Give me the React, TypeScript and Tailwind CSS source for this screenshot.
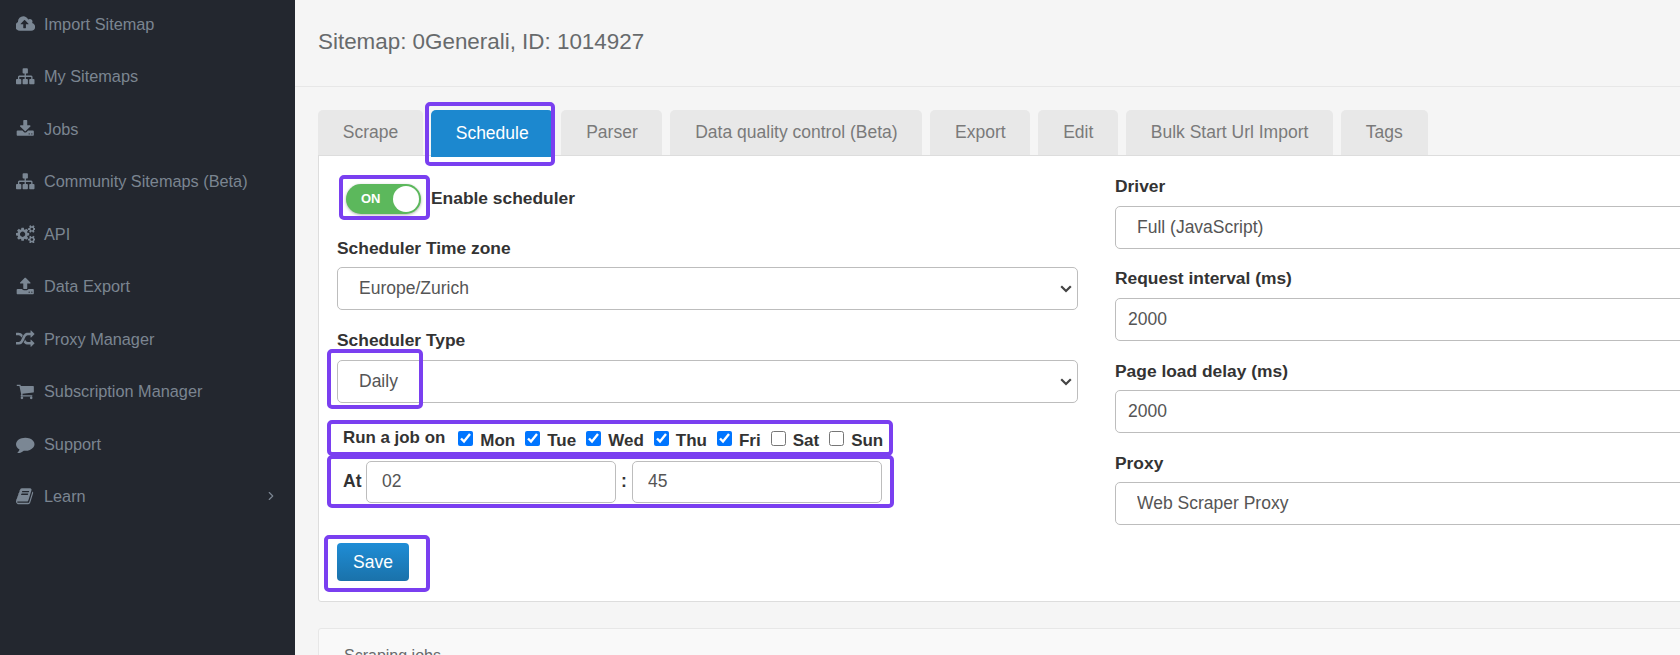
import React from "react";
import { ChevronRight } from "lucide-react";

// old font-awesome glyphs, the newer sets in react-icons draw these differently
const glyphs: Record<string, { d: string; w: number }> = {
  cloud: {
    w: 1920,
    d: "M1216 864q0-14-9-23l-352-352q-9-9-23-9t-23 9l-351 351q-10 12-10 24 0 14 9 23t23 9h224v352q0 13 9.5 22.5t22.5 9.5h192q13 0 22.5-9.5t9.5-22.5v-352h224q13 0 22.5-9.5t9.5-22.5zm640 288q0 159-112.5 271.5t-271.5 112.5h-1088q-185 0-316.5-131.5t-131.5-316.5q0-130 70-240t188-165q-2-30-2-43 0-212 150-362t362-150q156 0 285.5 87t188.5 231q71-62 166-62 106 0 181 75t75 181q0 76-41 138 130 31 213.5 135.5t83.5 238.5z",
  },
  sitemap: {
    w: 1792,
    d: "M1792 1248v320q0 40-28 68t-68 28h-320q-40 0-68-28t-28-68v-320q0-40 28-68t68-28h96v-192h-512v192h96q40 0 68 28t28 68v320q0 40-28 68t-68 28h-320q-40 0-68-28t-28-68v-320q0-40 28-68t68-28h96v-192h-512v192h96q40 0 68 28t28 68v320q0 40-28 68t-68 28h-320q-40 0-68-28t-28-68v-320q0-40 28-68t68-28h96v-192q0-52 38-90t90-38h512v-192h-96q-40 0-68-28t-28-68v-320q0-40 28-68t68-28h320q40 0 68 28t28 68v320q0 40-28 68t-68 28h-96v192h512q52 0 90 38t38 90v192h96q40 0 68 28t28 68z",
  },
  download: {
    w: 1792,
    d: "M1344 1344q0-26-19-45t-45-19-45 19-19 45 19 45 45 19 45-19 19-45zm256 0q0-26-19-45t-45-19-45 19-19 45 19 45 45 19 45-19 19-45zm128-224v320q0 40-28 68t-68 28h-1472q-40 0-68-28t-28-68v-320q0-40 28-68t68-28h465l135 136q58 56 136 56t136-56l136-136h464q40 0 68 28t28 68zm-325-569q17 41-14 70l-448 448q-18 19-45 19t-45-19l-448-448q-31-29-14-70 17-39 59-39h256v-448q0-26 19-45t45-19h256q26 0 45 19t19 45v448h256q42 0 59 39z",
  },
  cogs: {
    w: 1920,
    d: "M896 896q0-106-75-181t-181-75-181 75-75 181 75 181 181 75 181-75 75-181zm768 512q0-52-38-90t-90-38-90 38-38 90q0 53 37.5 90.5t90.5 37.5 90.5-37.5 37.5-90.5zm0-1024q0-52-38-90t-90-38-90 38-38 90q0 53 37.5 90.5t90.5 37.5 90.5-37.5 37.5-90.5zm-384 421v185q0 10-7 19.5t-16 10.5l-155 24q-11 35-32 76 34 48 90 115 7 11 7 20 0 12-7 19-23 30-82.5 89.5t-78.5 59.5q-11 0-21-7l-115-90q-37 19-77 31-11 108-23 155-7 24-30 24h-186q-11 0-20-7.5t-10-17.5l-23-153q-34-10-75-31l-118 89q-7 7-20 7-11 0-21-8-144-133-144-160 0-9 7-19 10-14 41-53t47-61q-23-44-35-82l-152-24q-10-1-17-9.5t-7-19.5v-185q0-10 7-19.5t16-10.5l155-24q11-35 32-76-34-48-90-115-7-11-7-20 0-12 7-20 22-30 82-89t79-59q11 0 21 7l115 90q34-18 77-32 11-108 23-154 7-24 30-24h186q11 0 20 7.5t10 17.5l23 153q34 10 75 31l118-89q8-7 20-7 11 0 21 8 144 133 144 160 0 8-7 19-12 16-42 54t-45 60q23 48 34 82l152 23q10 2 17 10.5t7 19.5zm640 533v140q0 16-149 31-12 27-30 52 51 113 51 138 0 4-4 7-122 71-124 71-8 0-46-47t-52-68q-20 2-30 2t-30-2q-14 21-52 68t-46 47q-2 0-124-71-4-3-4-7 0-25 51-138-18-25-30-52-149-15-149-31v-140q0-16 149-31 13-29 30-52-51-113-51-138 0-4 4-7 4-2 35-20t59-34 30-16q8 0 46 46.5t52 67.5q20-2 30-2t30 2q51-71 92-112l6-2q4 0 124 70 4 3 4 7 0 25-51 138 17 23 30 52 149 15 149 31zm0-1024v140q0 16-149 31-12 27-30 52 51 113 51 138 0 4-4 7-122 71-124 71-8 0-46-47t-52-68q-20 2-30 2t-30-2q-14 21-52 68t-46 47q-2 0-124-71-4-3-4-7 0-25 51-138-18-25-30-52-149-15-149-31v-140q0-16 149-31 13-29 30-52-51-113-51-138 0-4 4-7 4-2 35-20t59-34 30-16q8 0 46 46.5t52 67.5q20-2 30-2t30 2q51-71 92-112l6-2q4 0 124 70 4 3 4 7 0 25-51 138 17 23 30 52 149 15 149 31z",
  },
  upload: {
    w: 1792,
    d: "M1344 1472q0-26-19-45t-45-19-45 19-19 45 19 45 45 19 45-19 19-45zm256 0q0-26-19-45t-45-19-45 19-19 45 19 45 45 19 45-19 19-45zm128-224v320q0 40-28 68t-68 28h-1472q-40 0-68-28t-28-68v-320q0-40 28-68t68-28h427q21 56 70.5 92t110.5 36h256q61 0 110.5-36t70.5-92h427q40 0 68 28t28 68zm-325-648q-17 40-59 40h-256v448q0 26-19 45t-45 19h-256q-26 0-45-19t-19-45v-448h-256q-42 0-59-40-17-39 14-69l448-448q18-19 45-19t45 19l448 448q31 30 14 69z",
  },
  random: {
    w: 1792,
    d: "M666 481q-60 92-137 273-22-45-37-72.5t-40.5-63.5-51-56.5-63-35-81.5-14.5h-224q-14 0-23-9t-9-23v-192q0-14 9-23t23-9h224q250 0 410 225zm1126 799q0 14-9 23l-320 320q-9 9-23 9-13 0-22.5-9.5t-9.5-22.5v-192q-32 0-85 .5t-81 1-73-1-71-5-64-10.5-63-18.5-58-28.5-59-40-55-53.5-56-69.5q59-93 136-273 22 45 37 72.5t40.5 63.5 51 56.5 63 35 81.5 14.5h256v-192q0-14 9-23t23-9q12 0 24 10l319 319q9 9 9 23zm0-896q0 14-9 23l-320 320q-9 9-23 9-13 0-22.5-9.5t-9.5-22.5v-192h-256q-48 0-87 15t-69 45-51 61.5-45 77.5q-32 62-78 171-29 66-49.5 111t-54 105-64 100-74 83-90 68.5-106.5 42-128 16.5h-224q-14 0-23-9t-9-23v-192q0-14 9-23t23-9h224q48 0 87-15t69-45 51-61.5 45-77.5q32-62 78-171 29-66 49.5-111t54-105 64-100 74-83 90-68.5 106.5-42 128-16.5h256v-192q0-14 9-23t23-9q12 0 24 10l319 319q9 9 9 23z",
  },
  cart: {
    w: 1792,
    d: "M704 1536q0 52-38 90t-90 38-90-38-38-90 38-90 90-38 90 38 38 90zm896 0q0 52-38 90t-90 38-90-38-38-90 38-90 90-38 90 38 38 90zm128-1088v512q0 24-16.5 42.5t-40.5 21.5l-1044 122q13 60 13 70 0 16-24 64h920q26 0 45 19t19 45-19 45-45 19h-1024q-26 0-45-19t-19-45q0-11 8-31.5t16-36 21.5-40 15.5-29.5l-177-823h-204q-26 0-45-19t-19-45 19-45 45-19h256q16 0 28.5 6.5t19.5 15.5 13 24.5 8 26 5.5 29.5 4.5 26h1201q26 0 45 19t19 45z",
  },
  comment: {
    w: 1792,
    d: "M1792 896q0 174-120 321.5t-326 233-450 85.5q-70 0-145-8-198 175-460 242-49 14-114 22-17 2-30.5-9t-17.5-29v-1q-3-4-.5-12t2-10 4.5-9.5l6-9 7-8.5 8-9q7-8 31-34.5t34.5-38 31-39.5 32.5-51 27-59 26-76q-157-89-247.5-220t-90.5-281q0-130 71-248.5t191-204.5 286-136.5 348-50.5q244 0 450 85.5t326 233 120 321.5z",
  },
  book: {
    w: 1792,
    d: "M1639 478q40 57 18 129l-275 906q-19 64-76.5 107.5t-122.5 43.5h-923q-77 0-148.5-53.5t-99.5-131.5q-24-67-2-127 0-4 3-27t4-37q1-8-3-21.5t-3-19.5q2-11 8-21t16.5-23.5 16.5-23.5q23-38 45-91.5t30-91.5q3-10 .5-30t-.5-28q3-11 17-28t17-23q21-36 42-92t25-90q1-9-2.5-32t.5-28q4-13 22-30.5t22-22.5q19-26 42.5-84.5t27.5-96.5q1-8-3-25.5t-2-26.5q2-8 9-18t18-23 17-21q8-12 16.5-30.5t15-35 16-36 19.5-32 26.5-23.5 36-11.5 47.5 5.5l-1 3q38-9 51-9h761q74 0 114 56t18 130l-274 906q-36 119-71.5 153.5t-128.5 34.5h-869q-27 0-38 15-11 16-1 43 24 70 144 70h923q29 0 56-15.5t35-41.5l300-987q7-22 5-57 38 15 59 43zm-1064 2q-4 13 2 22.5t20 9.5h608q13 0 25.5-9.5t16.5-22.5l21-64q4-13-2-22.5t-20-9.5h-608q-13 0-25.5 9.5t-16.5 22.5zm-83 256q-4 13 2 22.5t20 9.5h608q13 0 25.5-9.5t16.5-22.5l21-64q4-13-2-22.5t-20-9.5h-608q-13 0-25.5 9.5t-16.5 22.5z",
  },
};

const navItems = [
  { label: "Import Sitemap", icon: "cloud" },
  { label: "My Sitemaps", icon: "sitemap" },
  { label: "Jobs", icon: "download" },
  { label: "Community Sitemaps (Beta)", icon: "sitemap" },
  { label: "API", icon: "cogs" },
  { label: "Data Export", icon: "upload" },
  { label: "Proxy Manager", icon: "random" },
  { label: "Subscription Manager", icon: "cart" },
  { label: "Support", icon: "comment" },
  { label: "Learn", icon: "book", arrow: true },
];

const tabs = [
  "Scrape",
  "Schedule",
  "Parser",
  "Data quality control (Beta)",
  "Export",
  "Edit",
  "Bulk Start Url Import",
  "Tags",
];

const days = ["Mon", "Tue", "Wed", "Thu", "Fri", "Sat", "Sun"];
const checkedDays = ["Mon", "Tue", "Wed", "Thu", "Fri"];

const markClass =
  "absolute border-[4px] border-[#7a3ff0] rounded-[5px] pointer-events-none";
const fieldClass =
  "block w-full bg-white border border-[#bdbdbd] rounded-[5px] text-[17.5px] text-[#555555] outline-none";

const Glyph = ({ name }: { name: string }) => {
  const g = glyphs[name];
  return (
    <svg width={(g.w / 1792) * 18.5} height={18.5} viewBox={`0 0 ${g.w} 1792`} fill="currentColor" className="shrink-0">
      <path d={g.d} />
    </svg>
  );
};

const Sidebar = () => (
  <aside className="w-[295px] h-full shrink-0 bg-[#23272f] text-[#7b8591] text-[16.3px]">
    <ul className="-mt-[2.5px]">
      {navItems.map((item) => (
        <li key={item.label} className="h-[52.5px] flex items-center pl-[16px] pr-[17px]">
          <span className="w-[19px] mr-[9px] flex justify-center text-[#7b8794]">
            <Glyph name={item.icon} />
          </span>
          <span className="flex-1">{item.label}</span>
          {item.arrow && <ChevronRight size={14} strokeWidth={2} />}
        </li>
      ))}
    </ul>
  </aside>
);

const Tabs = () => (
  <div className="flex gap-[8px] h-[46px] relative z-10">
    {tabs.map((tab) =>
      tab === "Schedule" ? (
        <div key={tab} className="relative">
          <div className="h-[47px] px-[24.75px] flex items-center bg-[#1c88cf] text-white rounded-t-[5px]">
            {tab}
          </div>
          <div className={`${markClass} -left-[6px] -right-[2px] -top-[8px] -bottom-[10px]`} />
        </div>
      ) : (
        <div
          key={tab}
          className="h-[46px] px-[24.75px] flex items-center bg-[#e8e8e8] text-[#7a7a7a] rounded-t-[5px] border-b border-[#dddddd]"
        >
          {tab}
        </div>
      )
    )}
  </div>
);

const Label = ({ children, lifted }: { children: React.ReactNode; lifted?: boolean }) => (
  <label
    className={`block font-bold text-[#333333] text-[17.4px] leading-[20px] ${
      lifted ? "-mt-[1px] mb-[10px]" : "mb-[9px]"
    }`}
  >
    {children}
  </label>
);

const SelectField = ({ value }: { value: string }) => (
  <div className="relative">
    <select defaultValue={value} className={`${fieldClass} appearance-none h-[43px] pl-[21px]`}>
      <option>{value}</option>
    </select>
    <svg width="12" height="8" viewBox="0 0 12 8" fill="none" className="absolute right-[6px] top-[18px]">
      <path d="M1.2 1.2 6 6l4.8-4.8" stroke="#444444" strokeWidth="2.2" />
    </svg>
  </div>
);

const InputField = ({ value }: { value: string }) => (
  <input defaultValue={value} className={`${fieldClass} h-[43px] px-[12px]`} />
);

export default function App() {
  return (
    <div className="w-[1680px] h-[655px] flex overflow-hidden bg-[#f5f5f5] font-['Liberation_Sans',Arial,sans-serif]">
      <Sidebar />
      <main className="flex-1 min-w-0 overflow-hidden">
        <div className="h-[87px] border-b border-[#e7e7e7] pl-[23px] flex items-center">
          <h1 className="text-[22.4px] text-[#676a6c] -mt-[3px]">Sitemap: 0Generali, ID: 1014927</h1>
        </div>
        <div className="pl-[23px] pt-[23px] w-[1580px] text-[17.5px]">
          <Tabs />
          <section className="h-[447px] -mt-[1px] bg-white border border-[#dddddd] rounded-b-[3px] px-[18px] pt-[18px] grid grid-cols-[741px_741px] gap-x-[37px]">
            <div>
              <div className="flex items-center h-[30px] mb-[24px] mt-[10px]">
                <div className="relative ml-[9px]">
                  <div className="w-[75px] h-[30px] rounded-full bg-[#5cb85c] flex items-center justify-between pl-[15px] pr-[2px] shadow-[0_1px_3px_rgba(0,0,0,0.3)]">
                    <span className="text-white font-bold text-[13px]">ON</span>
                    <span className="w-[26px] h-[26px] rounded-full bg-white" />
                  </div>
                  <div className={`${markClass} -left-[7px] -right-[9px] -top-[9px] -bottom-[6px]`} />
                </div>
                <span className="ml-[10px] -mt-[1px] font-bold text-[#333333] text-[17.4px]">Enable scheduler</span>
              </div>
              <Label>Scheduler Time zone</Label>
              <SelectField value="Europe/Zurich" />
              <div className="mt-[21px]">
                <Label lifted>Scheduler Type</Label>
                <div className="relative">
                  <SelectField value="Daily" />
                  <div className={`${markClass} -left-[10px] top-[-11px] w-[96px] h-[60px]`} />
                </div>
              </div>
              <div className="relative mt-[17px] h-[36px] flex items-center pl-[6px] font-bold text-[#333333] text-[17px]">
                <span className="mr-[13px] -mt-[1px] text-[16.9px]">Run a job on</span>
                {days.map((day) => (
                  <label key={day} className="flex items-center mr-[10px]">
                    <input
                      type="checkbox"
                      defaultChecked={checkedDays.includes(day)}
                      className="w-[15px] h-[15px] mr-[7px]"
                    />
                    <span className="mt-[5px]">{day}</span>
                  </label>
                ))}
                <div className={`${markClass} -left-[10px] w-[566px] inset-y-0`} />
              </div>
              <div className="relative h-[53px] flex items-center pl-[6px] font-bold text-[#333333] -mt-[1px]">
                <span className="w-[23px]">At</span>
                <input defaultValue="02" className={`${fieldClass} !w-[250px] h-[42px] px-[15px] font-normal`} />
                <span className="w-[16px] text-center">:</span>
                <input defaultValue="45" className={`${fieldClass} !w-[250px] h-[42px] px-[15px] font-normal`} />
                <div className={`${markClass} -left-[10px] w-[567px] inset-y-0`} />
              </div>
              <div className="relative mt-[35px] w-[72px]">
                <button className="block w-[72px] h-[38px] rounded-[4px] text-white text-[17.5px] bg-gradient-to-b from-[#1f8dd6] to-[#1a72aa]">
                  Save
                </button>
                <div className={`${markClass} -left-[13px] w-[106px] -top-[8px] -bottom-[11px]`} />
              </div>
            </div>
            <div className="pt-[3px]">
              <Label lifted>Driver</Label>
              <SelectField value="Full (JavaScript)" />
              <div className="mt-[20px]">
                <Label lifted>Request interval (ms)</Label>
                <InputField value="2000" />
              </div>
              <div className="mt-[20px]">
                <Label>Page load delay (ms)</Label>
                <InputField value="2000" />
              </div>
              <div className="mt-[20px]">
                <Label>Proxy</Label>
                <SelectField value="Web Scraper Proxy" />
              </div>
            </div>
          </section>
          <section className="mt-[26px] h-[60px] bg-[#f9f9f9] border border-[#e7e7e7] rounded-t-[3px] pl-[25px] pt-[15px] text-[16px] text-[#676a6c]">
            Scraping jobs
          </section>
        </div>
      </main>
    </div>
  );
}
